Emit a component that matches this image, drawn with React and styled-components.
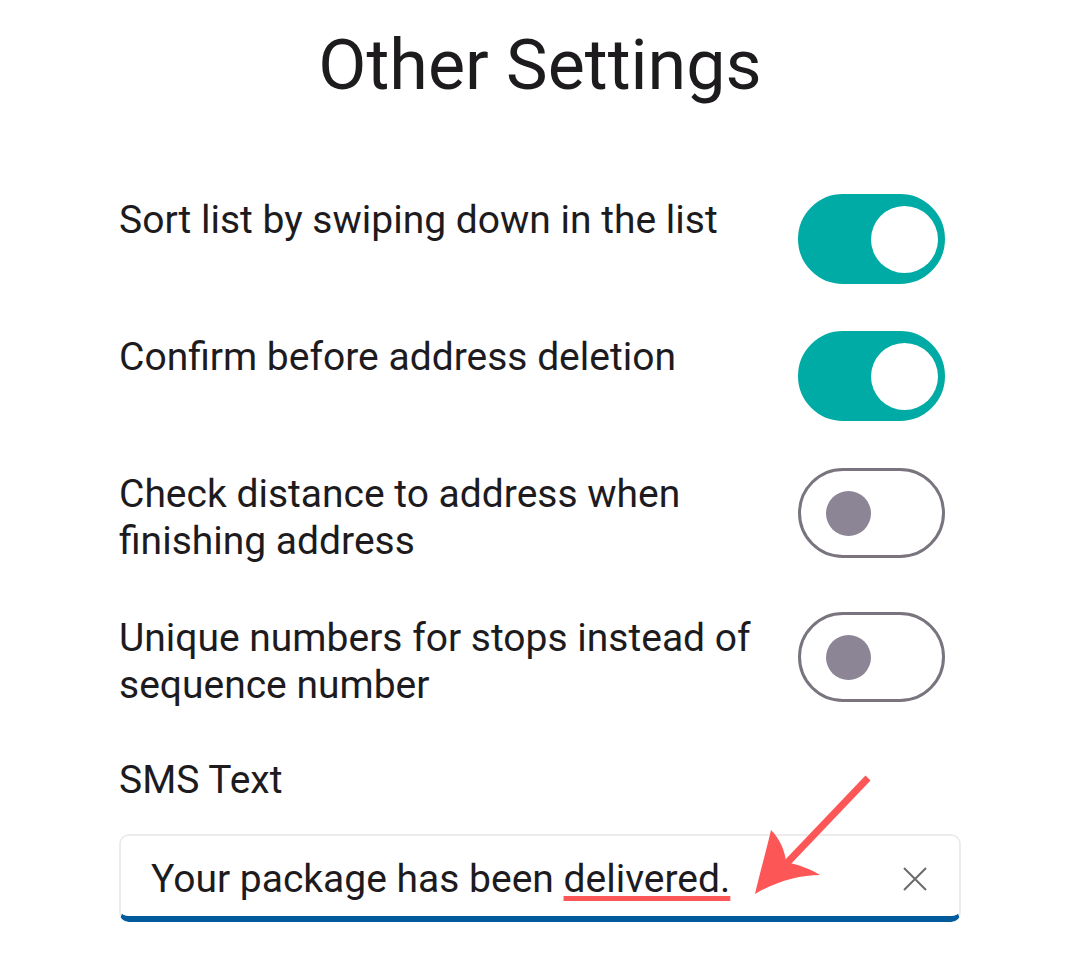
import React from "react";
import styled, { createGlobalStyle } from "styled-components";

const GlobalStyle = createGlobalStyle`
  html, body {
    margin: 0;
    padding: 0;
    background: #ffffff;
  }
  body {
    font-family: Roboto, "Noto Sans", sans-serif;
    color: #1d1b1e;
  }
`;

const settings = [
  { label: "Sort list by swiping down in the list", on: true },
  { label: "Confirm before address deletion", on: true },
  { label: "Check distance to address when finishing address", on: false },
  { label: "Unique numbers for stops instead of sequence number", on: false },
];

function App() {
  return (
    <Page>
      <GlobalStyle />
      <Title>Other Settings</Title>
      <List>
        {settings.map((s) => (
          <Row key={s.label}>
            <Label>{s.label}</Label>
            <Switch $on={s.on}>
              <Knob $on={s.on} />
            </Switch>
          </Row>
        ))}
      </List>
      <FieldLabel>SMS Text</FieldLabel>
      <InputBox>
        <InputText>
          Your package has been <Marked>delivered.</Marked>
        </InputText>
        <ClearButton>
          <svg width="24" height="24" viewBox="0 0 24 24">
            <path d="M1 1 L23 23 M23 1 L1 23" stroke="#6b6b6b" strokeWidth="2" fill="none" />
          </svg>
        </ClearButton>
        <Arrow width="140" height="140" viewBox="0 0 140 140">
          <path d="M126 11 L44 97" stroke="#fd5656" strokeWidth="7" fill="none" />
          <path
            d="M13 127 C18 105 24 85 29 63 C38 72 43 84 44 95 C58 98 68 102 78 108 C58 108 35 114 13 127 Z"
            fill="#fd5656"
          />
        </Arrow>
      </InputBox>
    </Page>
  );
}

const Page = styled.div`
  width: 1080px;
  min-height: 973px;
  box-sizing: border-box;
  padding: 20px 119px 0 119px;
  display: flex;
  flex-direction: column;
`;

const Title = styled.h1`
  margin: 0;
  text-align: center;
  font-size: 70px;
  font-weight: 400;
  line-height: 90px;
  color: #1d1b1e;
`;

const List = styled.div`
  margin-top: 84px;
  padding-right: 16px;
  display: flex;
  flex-direction: column;
  gap: 47px;
`;

const Row = styled.div`
  display: flex;
  align-items: flex-start;
  justify-content: space-between;
  gap: 40px;
`;

const Label = styled.div`
  padding-top: 3px;
  font-size: 39px;
  line-height: 47px;
  max-width: 650px;
  color: #1d1b1e;
`;

const Switch = styled.div`
  flex: none;
  width: 147px;
  height: 90px;
  box-sizing: border-box;
  border-radius: 45px;
  border: 3px solid ${(p) => (p.$on ? "#00aaa5" : "#79747e")};
  background: ${(p) => (p.$on ? "#00aaa5" : "#ffffff")};
  display: flex;
  align-items: center;
  justify-content: ${(p) => (p.$on ? "flex-end" : "flex-start")};
  padding: 0 ${(p) => (p.$on ? "4px" : "25px")};
`;

const Knob = styled.div`
  width: ${(p) => (p.$on ? "67px" : "45px")};
  height: ${(p) => (p.$on ? "67px" : "45px")};
  border-radius: 50%;
  background: ${(p) => (p.$on ? "#ffffff" : "#8c8595")};
`;

const FieldLabel = styled.div`
  margin-top: 48px;
  font-size: 39px;
  line-height: 47px;
  color: #1d1b1e;
`;

const InputBox = styled.div`
  position: relative;
  margin-top: 30px;
  height: 88px;
  box-sizing: border-box;
  border: 2px solid #ececec;
  border-bottom: 6px solid #005a9c;
  border-radius: 10px;
  background: #ffffff;
  display: flex;
  align-items: center;
  justify-content: space-between;
  padding: 0 32px 0 30px;
`;

const InputText = styled.div`
  font-size: 39px;
  line-height: 47px;
  color: #1d1b1e;
  padding-top: 6px;
`;

const Marked = styled.span`
  text-decoration: underline;
  text-decoration-color: #fd5656;
  text-decoration-thickness: 5px;
  text-underline-offset: 4px;
`;

const ClearButton = styled.div`
  width: 24px;
  height: 24px;
  margin-top: 6px;
  display: flex;
`;

const Arrow = styled.svg`
  position: absolute;
  left: 621px;
  top: -69px;
  overflow: visible;
`;

export default App;
